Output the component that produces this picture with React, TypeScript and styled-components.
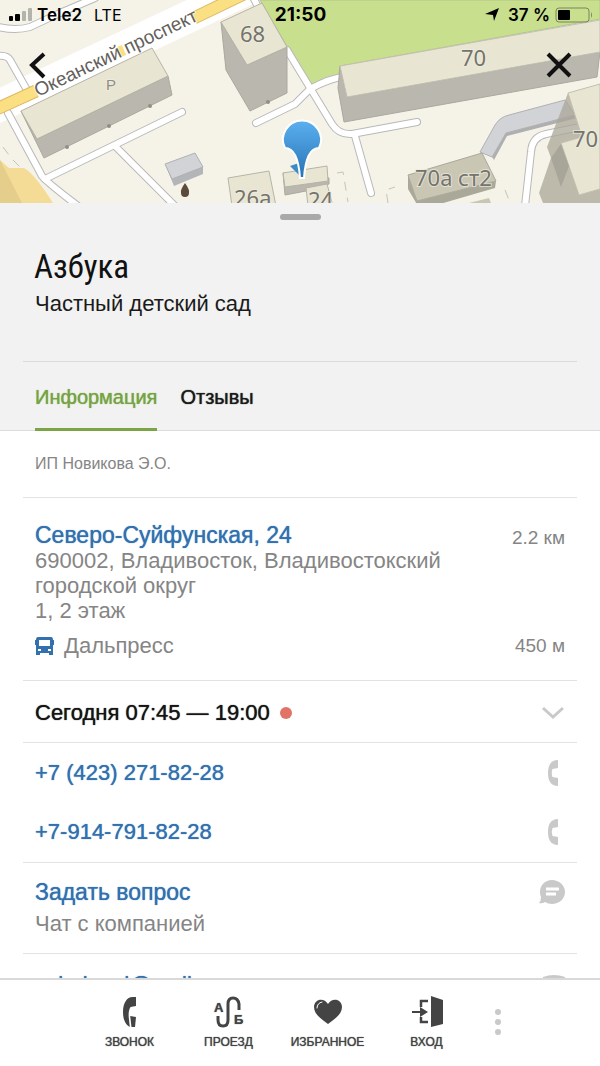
import React from "react";
import styled, { createGlobalStyle, css } from "styled-components";

const sans = `"Liberation Sans", Arial, sans-serif`;
const system = `Inter, "Liberation Sans", sans-serif`;

/* a weight between regular and bold */
const medium = css`
  font-family: ${sans};
  font-weight: 400;
  text-shadow: 0 0 1px currentColor;
`;

const GlobalStyle = createGlobalStyle`
  * { box-sizing: border-box; }
  body { margin: 0; background: #fff; font-family: ${sans}; color: #1a1a1a; }
  h1, h2, p { margin: 0; font-weight: 400; }
  button { margin: 0; padding: 0; border: 0; background: none; font: inherit; color: inherit; cursor: pointer; }
  a { color: inherit; text-decoration: none; }
  svg { display: block; flex: none; }
`;

const Screen = styled.div`
  display: flex;
  flex-direction: column;
  height: 100vh;
  overflow: hidden;
`;

const MapArea = styled.header`
  position: relative;
  flex: none;
  height: 203px;
  background: #f5f3e8;
`;

const MapDrawing = styled.svg`
  width: 100%;
  height: 100%;
`;

const MapOverlay = styled.div`
  position: absolute;
  inset: 0;
`;

const StatusBar = styled.div`
  display: grid;
  grid-template-columns: 1fr auto 1fr;
  align-items: center;
  height: 30px;
  padding: 0 7px 0 8px;
  font: 600 17px/30px ${system};
  color: #000;
`;

const StatusGroup = styled.div<{ $end?: boolean }>`
  display: flex;
  align-items: center;
  gap: 5px;
  justify-content: ${(p) => (p.$end ? "flex-end" : "flex-start")};
`;

const Clock = styled.time`
  font-weight: 700;
  font-size: 19px;
`;

const Percent = styled.span`
  margin-left: 4px;
`;

const Network = styled.span`
  margin-left: 7px;
  font-weight: 400;
  font-size: 16px;
`;

const MapNav = styled.nav`
  display: flex;
  justify-content: space-between;
  padding: 20px 26px 0 26px;
`;

const SheetHead = styled.section`
  flex: none;
  display: flex;
  flex-direction: column;
  background: #f2f2f2;
  border-bottom: 1px solid #dcdcdc;
`;

const Handle = styled.div`
  align-self: center;
  width: 41px;
  height: 6px;
  margin-top: 11px;
  border-radius: 3px;
  background: #a9a9a9;
`;

const Title = styled.h1`
  margin: 26px 34px 0;
  font: 400 33px/42px "Roboto Condensed", Roboto, sans-serif;
  color: #111;
`;

const Subtitle = styled.p`
  margin: 2px 35px 0;
  font-size: 22px;
  line-height: 28px;
`;

const Tabs = styled.nav`
  display: flex;
  gap: 23px;
  height: 70px;
  margin: 43px 23px -1px;
  padding: 0 12px;
  border-top: 1px solid #dcdcdc;
`;

const Tab = styled.button<{ $active?: boolean }>`
  padding-top: 4px;
  border-bottom: 3px solid transparent;
  ${medium}
  font-size: 20px;
  line-height: 24px;
  ${(p) =>
    p.$active &&
    css`
      color: #76a344;
      border-bottom-color: #7ba446;
    `}
`;

const Details = styled.main`
  flex: 1;
  min-height: 0;
  overflow: hidden;
  padding: 0 23px;
`;

const Block = styled.section`
  padding: 0 12px;
  border-bottom: 1px solid #e2e2e2;
`;

const Legal = styled.p`
  font-size: 16px;
  line-height: 66px;
  color: #858585;
`;

const AddressBlock = styled(Block)`
  padding-top: 24px;
  padding-bottom: 12px;
`;

const Row = styled.div<{ $height?: number; $inset?: boolean }>`
  display: flex;
  align-items: center;
  justify-content: space-between;
  min-height: ${(p) => p.$height ?? 25}px;
  padding: 0 ${(p) => (p.$inset ? 12 : 0)}px;
`;

const StrongLink = styled.a`
  ${medium}
  font-size: 23px;
  line-height: 26px;
  color: #3370ae;
`;

const ContactLink = styled(StrongLink)`
  font-size: 22px;
`;

const Text = styled.p`
  max-width: 440px;
  font-size: 22px;
  line-height: 25px;
  color: #858585;
`;

const Distance = styled.span<{ $low?: boolean }>`
  padding-top: ${(p) => (p.$low ? 6 : 0)}px;
  font-size: 19px;
  line-height: 20px;
  color: #858585;
`;

const Stop = styled.span`
  display: flex;
  align-items: center;
  gap: 10px;
  font-size: 22px;
  color: #858585;
`;

const Hours = styled.button`
  display: flex;
  align-items: center;
  width: 100%;
  height: 61px;
  padding-top: 2px;
  ${medium}
  font-size: 22px;
  line-height: 26px;
  color: #151515;
`;

const ClosedDot = styled.i`
  width: 12px;
  height: 12px;
  margin: 0 auto 0 10px;
  border-radius: 50%;
  background: #e17466;
`;

const ChatBlock = styled(Block)`
  padding-top: 16px;
  padding-bottom: 12px;
`;

const BottomBar = styled.nav`
  flex: none;
  display: flex;
  justify-content: center;
  height: 88px;
  border-top: 2px solid #d9d9d9;
  background: #fff;
`;

const Action = styled.button<{ $narrow?: boolean }>`
  display: flex;
  flex-direction: column;
  align-items: center;
  gap: 6px;
  width: ${(p) => (p.$narrow ? 44 : 99)}px;
  padding-top: 16px;
  ${medium}
  font-size: 12px;
  line-height: 16px;
  color: #444;
`;

const CallIcon = () => (
  <svg width="14" height="32" viewBox="0 0 14 32" fill="#444" aria-hidden="true">
    <path d="M13 1V10L7.5 11C5.6 14 5.4 18 5.8 22L6.8 31C1.5 28 0 22 0 16 0 7 4 1 9.500 1Z" />
    <path d="m7.200 20 5.800 1-1 10H8.500Z" />
  </svg>
);

const RouteIcon = () => (
  <svg width="32" height="32" viewBox="0 0 32 32" aria-hidden="true">
    <path d="M5 20V24Q5 30 10 30T15 24V8Q15 2 20 2T26 8V14" fill="none" stroke="#444" strokeWidth="3" />
    <g fontFamily={sans} fontWeight="700" fontSize="13" fill="#444">
      <text x="1" y="16">А</text>
      <text x="21" y="28">Б</text>
    </g>
  </svg>
);

const HeartIcon = () => (
  <svg width="30" height="32" viewBox="0 0 30 32" aria-hidden="true">
    <path d="M15 28C8 23 1 18 1 11 1 3 11 1 15 8 19 1 29 3 29 11 29 18 22 23 15 28Z" fill="#444" />
    <path d="M4 12Q4 7 9 6" fill="none" stroke="#fff" strokeWidth="1" strokeLinecap="round" />
  </svg>
);

const EntranceIcon = () => (
  <svg width="32" height="32" viewBox="0 0 32 32" fill="#444" aria-hidden="true">
    <path d="M20 0 32 4V28L20 31Z" />
    <path d="M17 5H10V11M10 21V26H17" fill="none" stroke="#444" strokeWidth="2.500" />
    <path d="M1 15H9V11L17 16 9 21V17H1Z" />
  </svg>
);

const MoreIcon = () => (
  <svg width="8" height="42" viewBox="0 0 8 42" fill="#c9c9c9" aria-hidden="true">
    <circle cx="4" cy="16" r="3" /><circle cx="4" cy="26" r="3" /><circle cx="4" cy="36" r="3" />
  </svg>
);

const RowPhone = () => (
  <svg width="24" height="28" viewBox="0 0 24 28" fill="#c9c9c9" aria-hidden="true">
    <path d="M17 1C10 1 7 6 7 14S10 27 17 27V19L11.500 18Q10 14 11.500 10L17 9Z" />
  </svg>
);

function CityMap() {
  const roads = [
    "M-2 27Q16 31 30 27L60 13 95-2",
    "M-2 56Q7 55 10 60L27 90",
    "M8 113 42 176Q44 180 78 206",
    "M45 179 182 112",
    "M115 146 175 206",
    "M253-3 257 5M287 50 332 124Q339 135 352 134L417 122",
    "M256 123 295 104 310 89Q330 78 344 77",
    "M355 136 371 193",
    "M525 206 531 152Q532 137 546 134L580 127",
  ];
  return (
    <MapDrawing viewBox="0 0 600 203" preserveAspectRatio="xMidYMin slice" role="img" aria-label="Карта">
      <defs>
        <linearGradient id="pin" x1="0" y1="0" x2="0" y2="1">
          <stop offset="0" stopColor="#5bb0f0" />
          <stop offset="1" stopColor="#2873b4" />
        </linearGradient>
      </defs>
      <rect width="600" height="203" fill="#f5f3e8" />
      <path d="M260 0 310 86 339 75 340 66 600 19V0Z" fill="#c8df8e" stroke="#b4c48b" />
      <path d="M-10 110 250-12" stroke="#fff" strokeWidth="32" />
      <g fill="none" strokeLinecap="round" strokeLinejoin="round">
        <g stroke="#b9b9bb" strokeWidth="8">{roads.map((d) => <path key={d} d={d} />)}</g>
        <g stroke="#fff" strokeWidth="6">{roads.map((d) => <path key={d} d={d} />)}</g>
      </g>
      <path d="M-10 112 36 91M194 18 250-9" stroke="#dfb963" strokeWidth="13" />
      <path d="M-10 112 36 91M194 18 250-9" stroke="#fae083" strokeWidth="11" />
      <path d="M119 52 124 50" stroke="#fae083" strokeWidth="11" />
      <path d="M0 160 9 168 24 168Q34 173 53 203H0Z" fill="#f5dc96" />
      <path d="M0 160 22 203H0Z" fill="#e5cd8c" />
      <g strokeWidth="1" strokeLinejoin="round">
        <path d="M21 111 37 139 168 76 172 95 44 158Z" fill="#b9b7ae" stroke="#aaa89f" />
        <path d="M21 111 152 48 168 76 37 139Z" fill="#e8e6d2" stroke="#b6b4a6" />
        <path d="m165 164 7 14 31-12v8l-29 12Z" fill="#b4b5b9" />
        <path d="m165 164 30-11 8 14-31 12Z" fill="#d2d3d6" stroke="#b1b1b4" />
        <path d="m221 22 26 43 40-18v46l-37 18-24-41Z" fill="#b9b7ae" stroke="#aaa89f" />
        <path d="m221 22 41-19 25 44-40 18Z" fill="#e8e6d2" stroke="#b6b4a6" />
        <path d="m340 66 7 31 253-45-3 25-253 45-6-34Z" fill="#b9b7ae" stroke="#aaa89f" />
        <path d="M340 66 600 20v32L347 97Z" fill="#e8e6d2" stroke="#c2c0b2" />
        <path d="m228 178 41-7 7 35h-44Z" fill="#e8e6d2" stroke="#b6b4a6" />
        <path d="m283 173 2 22 21-4 23-7v-6Z" fill="#b9b7ae" stroke="#aaa89f" />
        <path d="m283 173 44-7 1 15-43 6Z" fill="#e8e6d2" stroke="#b6b4a6" />
        <path d="m306 188 21-4 6 22h-25Z" fill="#e8e6d2" stroke="#b6b4a6" />
        <path d="m507 136-13 24-2-3 14-25 66-18 5 4Z" fill="#afafb2" />
        <path d="m480 152 15-27q5-8 14-10l56-15 10 15-69 18-14 24Z" fill="#d2d3d6" stroke="#b1b1b4" />
        <path d="m408 175 9 26 79-20-1 7-62 18h-15l-10-17Z" fill="#aaa898" />
        <path d="m408 175 74-22 14 28-79 20Z" fill="#c9c7b4" stroke="#aaa898" />
        <path d="m469 203 20-5 2 5Z" fill="#c9c7b4" />
        <path d="M568 93 547 147 551 158 539 193 543 203H600V84Z" fill="#a9a798" fillOpacity=".75" />
        <path d="M568 93 600 84V189L579 195 561 143 582 137Z" fill="#e8e6d2" stroke="#c2c0b2" />
        <path d="m551 158 10 29 8-21-8-22Z" fill="#8f8d82" fillOpacity=".45" />
      </g>
      <path d="m337 173 6-1 5 30M388 203l-2-13 9-3M3 147l6 8M13 160l8 8M505 190l4 10" fill="none" stroke="#c5c3ba" strokeDasharray="9 7" />
      <g fill="#918e86"><circle cx="67" cy="147" r="2" /><circle cx="109" cy="126" r="2" /><circle cx="150" cy="106" r="2" /><circle cx="268" cy="102" r="2" /></g>
      <path d="M185 183Q180 190 181 193a4 4 0 0 0 8 0Q190 190 185 183Z" fill="#5d4a3c" />
      <g fontFamily='"Noto Sans", sans-serif' fill="#75736e" stroke="#f0eee0" strokeOpacity=".7" strokeWidth="2" paintOrder="stroke">
        <text x="240" y="42" fontSize="22">68</text>
        <text x="461" y="66" fontSize="22">70</text>
        <text x="573" y="147" fontSize="22">70</text>
        <text x="415" y="186" fontSize="22">70а ст2</text>
        <text x="234" y="206" fontSize="22">26а</text>
        <text x="308" y="208" fontSize="22">24</text>
        <text x="106" y="90" fontSize="15" fontFamily={sans} fill="#8f8d85">P</text>
        <text transform="translate(38 97) rotate(-25.5)" fontSize="19" fontFamily={sans} fill="#64605c" stroke="#fff">Океанский проспект</text>
      </g>
      <path d="m290 166 12-4v16Z" fill="#3b8ac9" />
      <path d="M285 148a19 19 0 1 1 34 0Q306 148 304 178h-4Q298 148 285 148Z" fill="url(#pin)" stroke="#fff" strokeWidth="2" />
    </MapDrawing>
  );
}

export default function App() {
  return (
    <Screen>
      <GlobalStyle />
      <MapArea>
        <CityMap />
        <MapOverlay>
          <StatusBar>
            <StatusGroup>
              <svg width="24" height="14" viewBox="0 0 24 14" aria-hidden="true">
                <rect x="1" y="8" width="4" height="5" rx="1" />
                <rect x="7" y="6" width="5" height="7" rx="1" />
                <g fill="#b5b4ac"><rect x="14" y="3" width="4" height="10" rx="1" /><rect x="20" y="0" width="4" height="13" rx="1" /></g>
              </svg>
              Tele2
              <Network>LTE</Network>
            </StatusGroup>
            <Clock>21:50</Clock>
            <StatusGroup $end>
              <svg width="14" height="14" viewBox="0 0 14 14" aria-hidden="true"><path d="M14 0 9 13 8 7 0 6Z" /></svg>
              <Percent>37 %</Percent>
              <svg width="38" height="16" viewBox="0 0 38 16" aria-hidden="true">
                <rect x="1" y="1" width="33" height="14" rx="3" fill="none" stroke="#7c8560" />
                <rect x="3" y="3" width="12" height="10" rx="1" />
                <path d="M36 5q2 3 0 6Z" fill="#7c8560" />
              </svg>
            </StatusGroup>
          </StatusBar>
          <MapNav>
            <button aria-label="Назад">
              <svg width="24" height="30" viewBox="0 0 24 30" fill="none" stroke="#111" strokeWidth="4"><path d="M18 4 6 15 18 27" /></svg>
            </button>
            <button aria-label="Закрыть">
              <svg width="30" height="30" viewBox="0 0 30 30" fill="none" stroke="#111" strokeWidth="4"><path d="M4 4 26 26M26 4 4 26" /></svg>
            </button>
          </MapNav>
        </MapOverlay>
      </MapArea>

      <SheetHead>
        <Handle />
        <Title>Азбука</Title>
        <Subtitle>Частный детский сад</Subtitle>
        <Tabs>
          <Tab $active>Информация</Tab>
          <Tab>Отзывы</Tab>
        </Tabs>
      </SheetHead>

      <Details>
        <Block><Legal>ИП Новикова Э.О.</Legal></Block>
        <AddressBlock>
          <Row>
            <StrongLink href="#address">Северо-Суйфунская, 24</StrongLink>
            <Distance $low>2.2 км</Distance>
          </Row>
          <Text>690002, Владивосток, Владивостокский городской округ</Text>
          <Text>1, 2 этаж</Text>
          <Row $height={45}>
            <Stop>
              <svg width="19" height="20" viewBox="0 0 19 20" fill="#3370ae" aria-hidden="true">
                <path fillRule="evenodd" d="M3 1h13q2 0 2 3h1v5h-1v10h-4v-2H5v2H1V9H0V4h1q0-3 2-3Zm1 3v6h11V4ZM3 13v2h3v-2Zm10 0v2h3v-2Z" />
              </svg>
              Дальпресс
            </Stop>
            <Distance>450 м</Distance>
          </Row>
        </AddressBlock>
        <Block>
          <Hours>
            Сегодня 07:45 — 19:00
            <ClosedDot />
            <svg width="24" height="16" viewBox="0 0 24 16" fill="none" stroke="#c9c9c9" strokeWidth="3" aria-hidden="true"><path d="m2 3 10 9L22 3" /></svg>
          </Hours>
        </Block>
        <Block>
          <Row $height={59}><ContactLink href="tel:+74232718228">+7 (423) 271-82-28</ContactLink><RowPhone /></Row>
          <Row $height={60}><ContactLink href="tel:+79147918228">+7-914-791-82-28</ContactLink><RowPhone /></Row>
        </Block>
        <ChatBlock>
          <Row>
            <StrongLink href="#chat">Задать вопрос</StrongLink>
            <svg width="26" height="24" viewBox="0 0 26 24" aria-hidden="true">
              <path d="M13 0c7 0 13 5 13 12s-6 12-13 12q-4 0-7-2-3 2-6 1 2-2 2-6-1-2-1-5C1 5 6 0 13 0Z" fill="#c9c9c9" />
              <path d="M7 9h13M7 14h10" stroke="#fff" strokeWidth="3" />
            </svg>
          </Row>
          <Row $height={36}><Text>Чат с компанией</Text></Row>
        </ChatBlock>
        <Row $height={62} $inset>
          <ContactLink href="mailto:azbukavd@mail.ru">azbukavd@mail.ru</ContactLink>
          <svg width="22" height="20" viewBox="0 0 22 20" fill="#c9c9c9" aria-hidden="true">
            <path d="M0 2Q11-2 22 2V20H0Z" />
          </svg>
        </Row>
      </Details>

      <BottomBar>
        <Action><CallIcon />ЗВОНОК</Action>
        <Action><RouteIcon />ПРОЕЗД</Action>
        <Action><HeartIcon />ИЗБРАННОЕ</Action>
        <Action><EntranceIcon />ВХОД</Action>
        <Action $narrow aria-label="Ещё"><MoreIcon /></Action>
      </BottomBar>
    </Screen>
  );
}
